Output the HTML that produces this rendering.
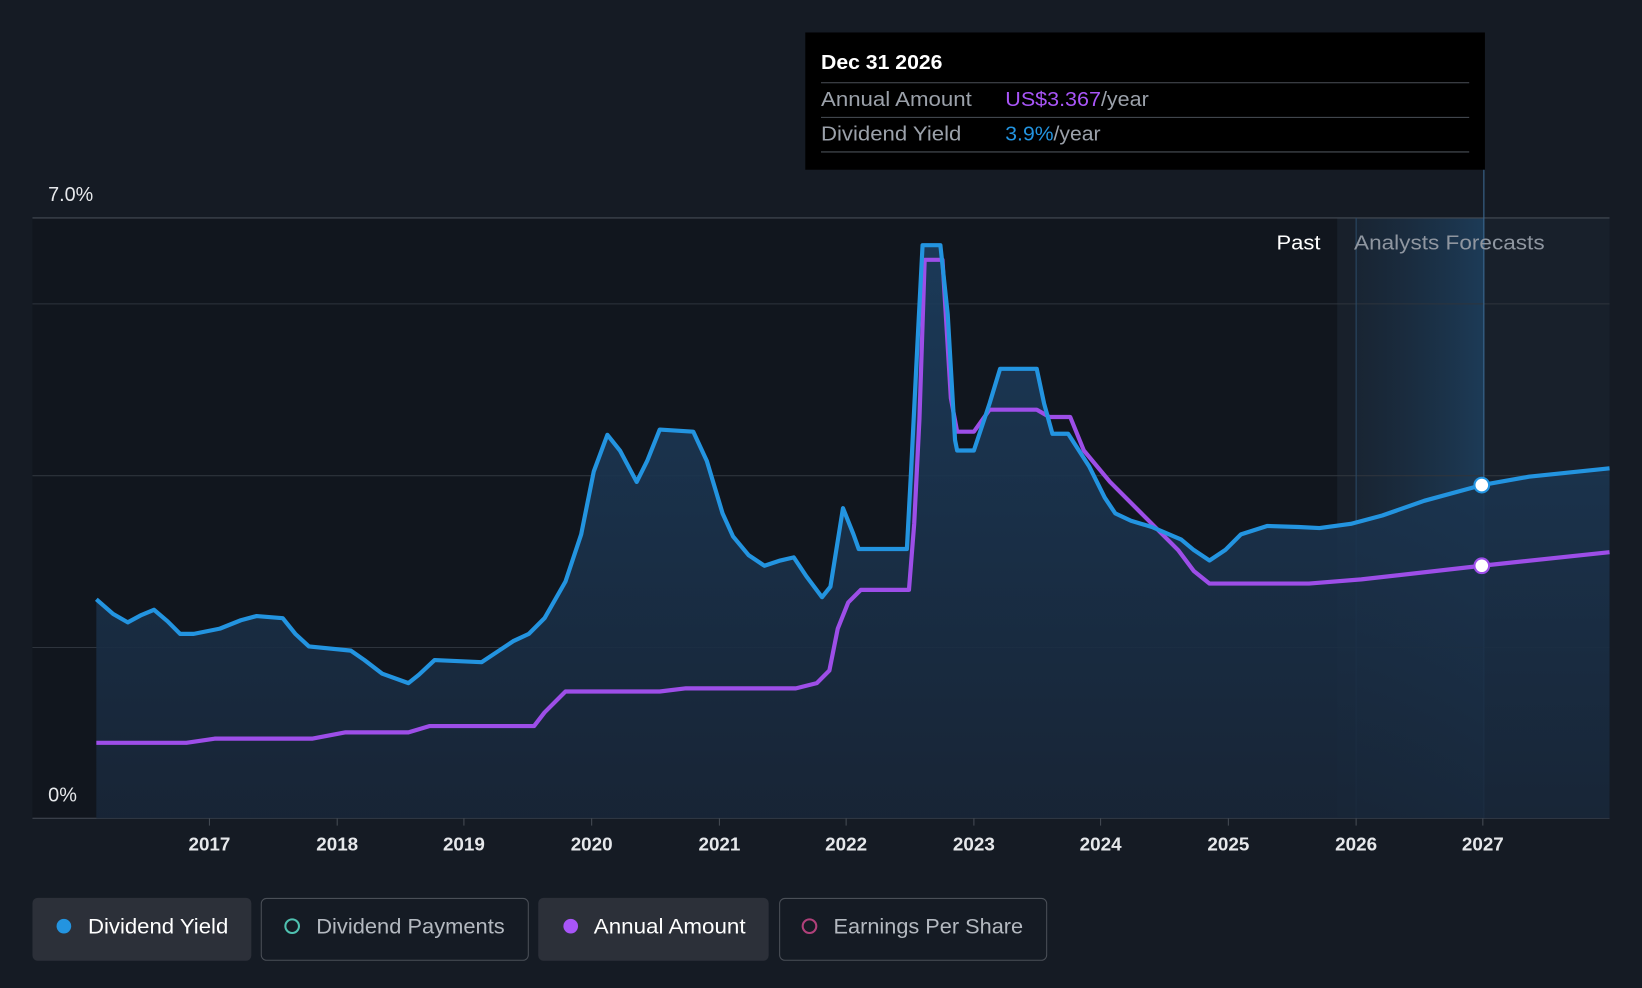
<!DOCTYPE html>
<html><head><meta charset="utf-8"><style>
html,body{margin:0;padding:0;background:#151b24;}
svg{display:block;font-family:"Liberation Sans",sans-serif;}
</style></head><body>
<svg width="1642" height="988" viewBox="0 0 1568 943" preserveAspectRatio="none" xmlns="http://www.w3.org/2000/svg">
<defs>
<linearGradient id="ar" x1="0" y1="0" x2="0" y2="1"><stop offset="0" stop-color="#1c3d5e" stop-opacity="0.9"/><stop offset="1" stop-color="#182638" stop-opacity="0.9"/></linearGradient>
<linearGradient id="fc" x1="0" y1="0" x2="1" y2="0"><stop offset="0" stop-color="#1a3046" stop-opacity="0.3"/><stop offset="1" stop-color="#1d3e5c" stop-opacity="0.9"/></linearGradient>
</defs>
<rect width="1568" height="943" fill="#151b24"/>
<rect x="31" y="208" width="1246" height="573" fill="#11161e"/>
<rect x="1277" y="208" width="260" height="573" fill="#18202b"/>
<rect x="1295" y="208" width="122" height="573" fill="url(#fc)"/>
<g stroke="#2e343d" stroke-width="1">
<line x1="31" y1="208" x2="1537" y2="208" stroke="#454b54"/>
<line x1="31" y1="290" x2="1537" y2="290"/>
<line x1="31" y1="454" x2="1537" y2="454"/>
<line x1="31" y1="618" x2="1537" y2="618"/>
<line x1="31" y1="781" x2="1537" y2="781" stroke="#454b54"/>
</g>
<line x1="1295" y1="208" x2="1295" y2="781" stroke="#2a4966"/>
<line x1="1417" y1="160" x2="1417" y2="781" stroke="#3c6a93"/>
<polygon fill="url(#ar)" points="92,781 92,572 108,586 122,594 135,587 147,582 160,593 172,605 185,605 210,600 230,592 245,588 270,590 282,605 295,617 335,621 348,630 365,643 390,652 400,644 415,630 460,632 475,622 490,612 505,605 520,590 540,555 555,510 567,450 580,415 592,430 608,460 618,440 630,410 662,412 675,440 690,490 700,512 715,530 730,540 745,535 758,532 770,550 785,570 793,560 805,485 815,510 820,524 866,524 870,450 876,330 881,234 898,234 905,300 912,420 914,430 930,430 945,385 955,352 990,352 997,385 1005,414 1020,414 1040,445 1055,475 1065,490 1080,497 1100,503 1128,515 1140,525 1155,535 1170,525 1185,510 1210,502 1240,503 1260,504 1290,500 1320,492 1360,478 1415,463 1460,455 1537,447 1537,781"/>
<polyline fill="none" stroke="#9d4ee8" stroke-width="4" stroke-linejoin="round" points="92,709 178,709 205,705 298,705 330,699 390,699 410,693 510,693 520,680 540,660 630,660 655,657 760,657 780,652 792,640 800,600 810,575 822,563 868,563 873,500 878,400 883,248 900,248 908,380 914,412 930,412 945,391 990,391 1002,398 1022,398 1035,430 1060,460 1090,490 1125,525 1140,545 1155,557 1250,557 1300,553 1415,540 1537,527"/>
<polyline fill="none" stroke="#2394e0" stroke-width="4" stroke-linejoin="round" points="92,572 108,586 122,594 135,587 147,582 160,593 172,605 185,605 210,600 230,592 245,588 270,590 282,605 295,617 335,621 348,630 365,643 390,652 400,644 415,630 460,632 475,622 490,612 505,605 520,590 540,555 555,510 567,450 580,415 592,430 608,460 618,440 630,410 662,412 675,440 690,490 700,512 715,530 730,540 745,535 758,532 770,550 785,570 793,560 805,485 815,510 820,524 866,524 870,450 876,330 881,234 898,234 905,300 912,420 914,430 930,430 945,385 955,352 990,352 997,385 1005,414 1020,414 1040,445 1055,475 1065,490 1080,497 1100,503 1128,515 1140,525 1155,535 1170,525 1185,510 1210,502 1240,503 1260,504 1290,500 1320,492 1360,478 1415,463 1460,455 1537,447"/>
<circle cx="1415" cy="463" r="7" fill="#fff" stroke="#2394e0" stroke-width="2"/>
<circle cx="1415" cy="540" r="7" fill="#fff" stroke="#9d4ee8" stroke-width="2"/>
<text x="46" y="192" fill="#e6e8eb" font-size="19" textLength="43" lengthAdjust="spacingAndGlyphs">7.0%</text>
<text x="46" y="765" fill="#e6e8eb" font-size="19">0%</text>
<text x="1219" y="238" fill="#fff" font-size="19" textLength="42" lengthAdjust="spacingAndGlyphs">Past</text>
<text x="1293" y="238" fill="#8f96a0" font-size="19" textLength="182" lengthAdjust="spacingAndGlyphs">Analysts Forecasts</text>
<g stroke="#454b54"><line x1="200" y1="781" x2="200" y2="788"/><line x1="322" y1="781" x2="322" y2="788"/><line x1="443" y1="781" x2="443" y2="788"/><line x1="565" y1="781" x2="565" y2="788"/><line x1="687" y1="781" x2="687" y2="788"/><line x1="808" y1="781" x2="808" y2="788"/><line x1="930" y1="781" x2="930" y2="788"/><line x1="1051" y1="781" x2="1051" y2="788"/><line x1="1173" y1="781" x2="1173" y2="788"/><line x1="1295" y1="781" x2="1295" y2="788"/><line x1="1416" y1="781" x2="1416" y2="788"/></g>
<g fill="#e6e8eb" font-size="18" font-weight="bold" text-anchor="middle">
<text x="200" y="812">2017</text><text x="322" y="812">2018</text><text x="443" y="812">2019</text><text x="565" y="812">2020</text><text x="687" y="812">2021</text><text x="808" y="812">2022</text><text x="930" y="812">2023</text><text x="1051" y="812">2024</text><text x="1173" y="812">2025</text><text x="1295" y="812">2026</text><text x="1416" y="812">2027</text>
</g>
<rect x="769" y="31" width="649" height="131" fill="#000"/>
<text x="784" y="66" fill="#fff" font-size="19" font-weight="bold" textLength="116" lengthAdjust="spacingAndGlyphs">Dec 31 2026</text>
<g stroke="#4a4f57"><line x1="784" y1="79" x2="1403" y2="79"/><line x1="784" y1="112" x2="1403" y2="112"/><line x1="784" y1="145" x2="1403" y2="145"/></g>
<text x="784" y="101" fill="#9ba1aa" font-size="19" textLength="144" lengthAdjust="spacingAndGlyphs">Annual Amount</text>
<text x="960" y="101" font-size="19" textLength="137" lengthAdjust="spacingAndGlyphs"><tspan fill="#a855f7">US$3.367</tspan><tspan fill="#9ba1aa">/year</tspan></text>
<text x="784" y="134" fill="#9ba1aa" font-size="19" textLength="134" lengthAdjust="spacingAndGlyphs">Dividend Yield</text>
<text x="960" y="134" font-size="19" textLength="91" lengthAdjust="spacingAndGlyphs"><tspan fill="#2394e0">3.9%</tspan><tspan fill="#9ba1aa">/year</tspan></text>
<rect x="31" y="857" width="209" height="60" rx="5" fill="#2c3039"/>
<circle cx="61" cy="884" r="7" fill="#2394e0"/>
<text x="84" y="891" fill="#fff" font-size="20" textLength="134" lengthAdjust="spacingAndGlyphs">Dividend Yield</text>
<rect x="249.5" y="857.5" width="255" height="59" rx="5" fill="none" stroke="#4a4f57"/>
<circle cx="279" cy="884" r="6.5" fill="none" stroke="#4fc1b0" stroke-width="2"/>
<text x="302" y="891" fill="#b4b9c0" font-size="20" textLength="180" lengthAdjust="spacingAndGlyphs">Dividend Payments</text>
<rect x="514" y="857" width="220" height="60" rx="5" fill="#2c3039"/>
<circle cx="545" cy="884" r="7" fill="#a855f7"/>
<text x="567" y="891" fill="#fff" font-size="20" textLength="145" lengthAdjust="spacingAndGlyphs">Annual Amount</text>
<rect x="744.5" y="857.5" width="255" height="59" rx="5" fill="none" stroke="#4a4f57"/>
<circle cx="773" cy="884" r="6.5" fill="none" stroke="#b0407a" stroke-width="2"/>
<text x="796" y="891" fill="#b4b9c0" font-size="20" textLength="181" lengthAdjust="spacingAndGlyphs">Earnings Per Share</text>
</svg>
</body></html>
